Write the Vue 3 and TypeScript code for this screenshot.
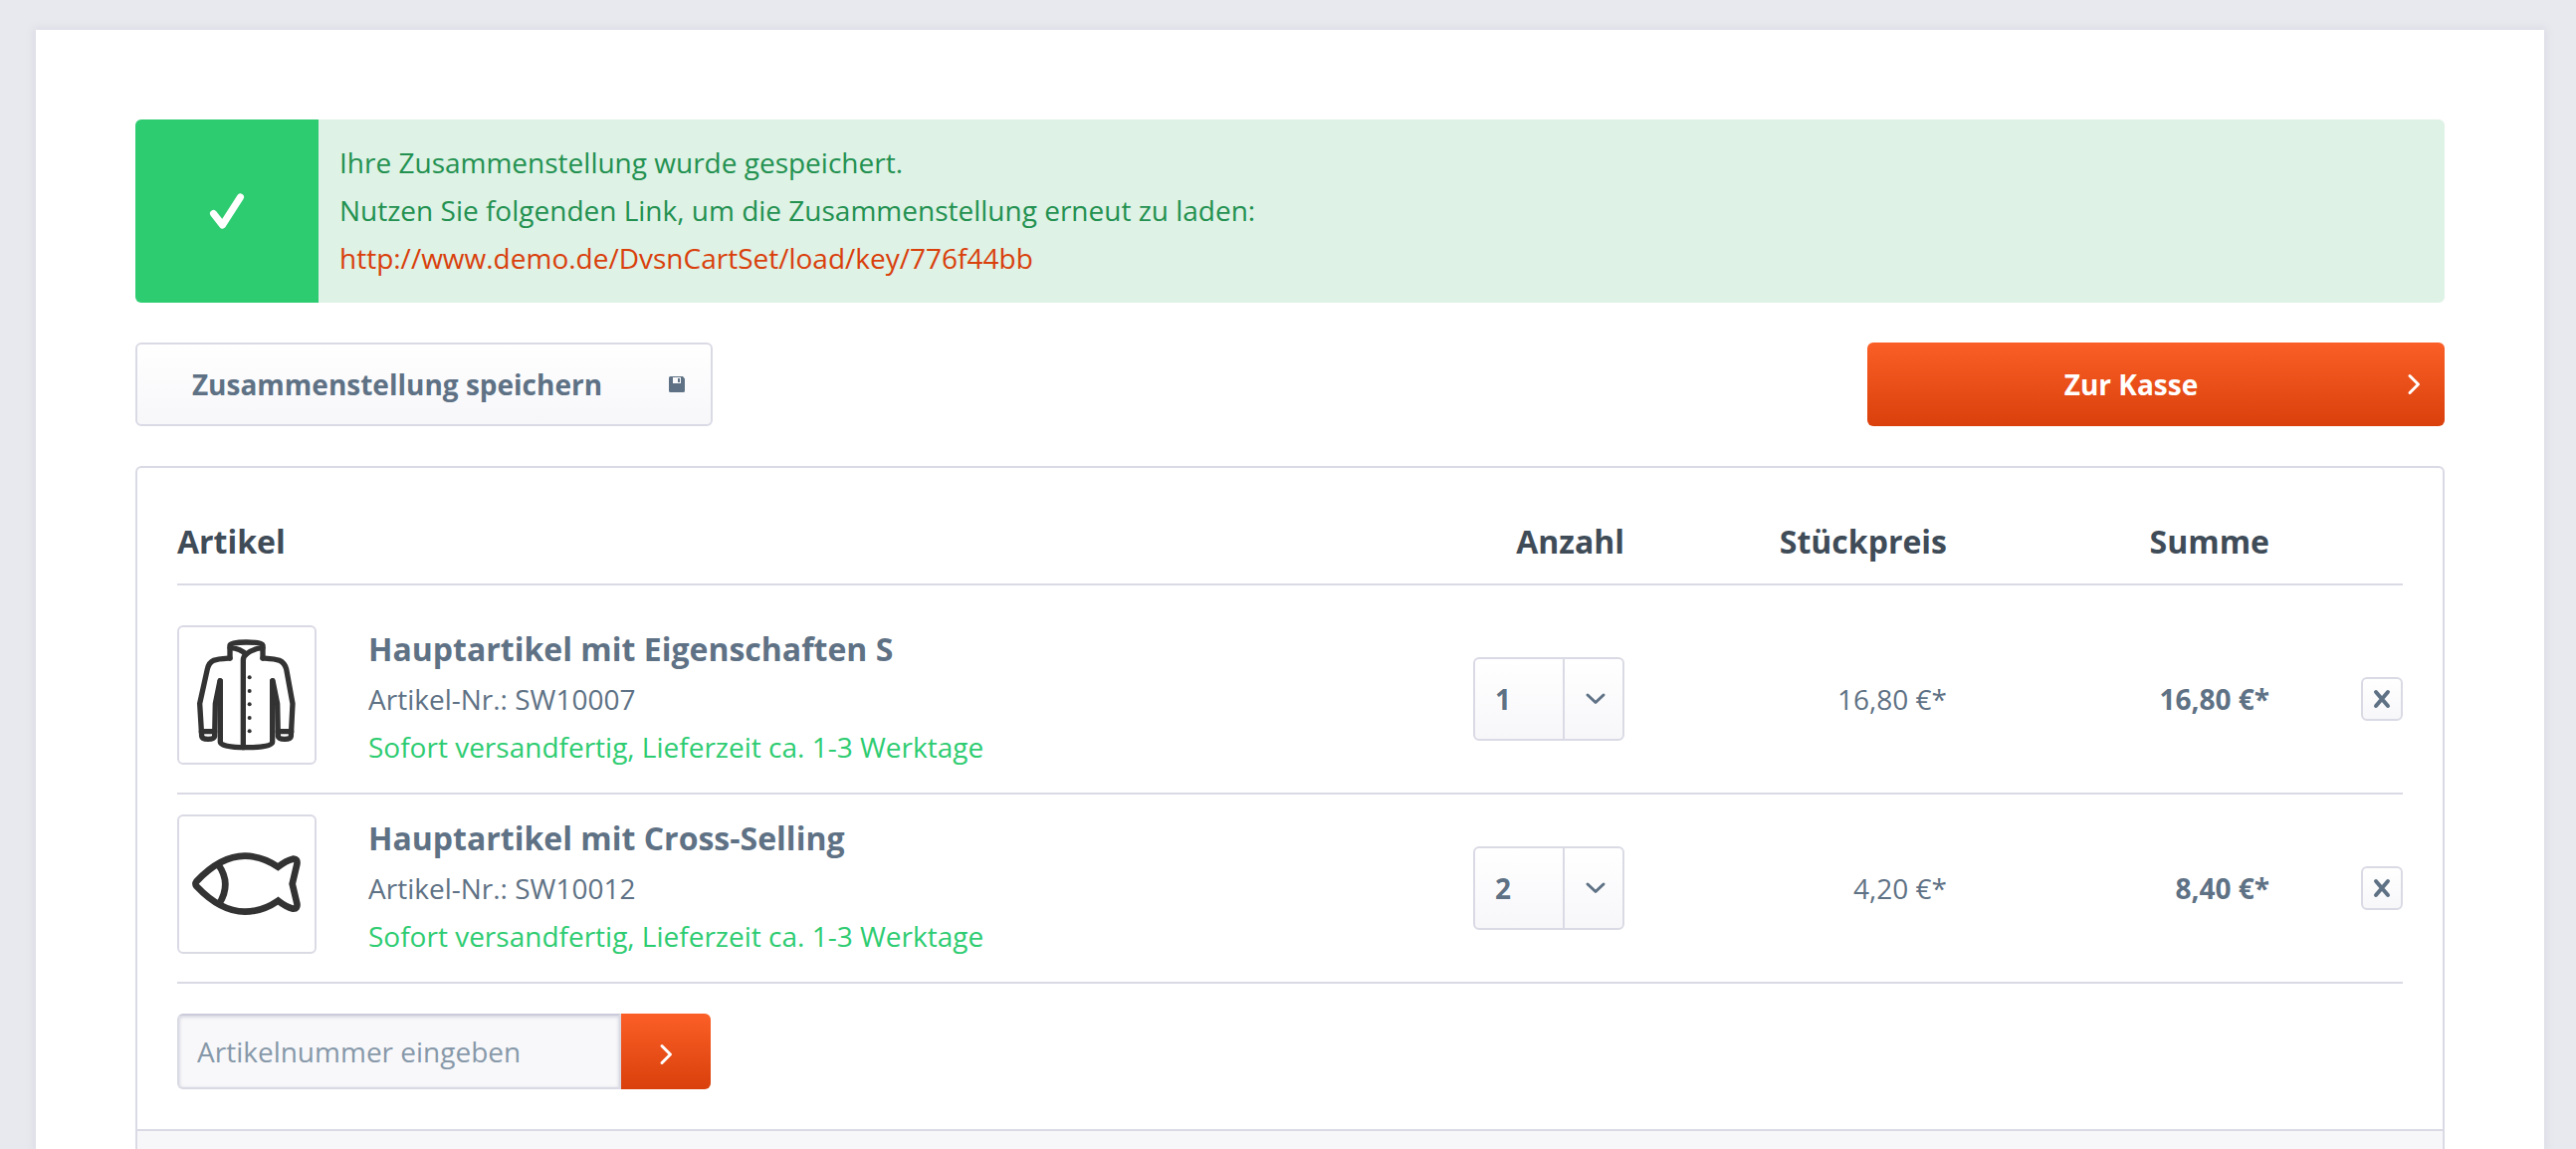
<script setup lang="ts">
import { ref } from 'vue'

interface CartItem {
  id: string
  name: string
  delivery: string
  quantity: number
  price: string
  sum: string
  picture: 'jacket' | 'fish'
}

const loadUrl = 'http://www.demo.de/DvsnCartSet/load/key/776f44bb'
const articleNumber = ref('')

const items = ref<CartItem[]>([
  {
    id: 'SW10007',
    name: 'Hauptartikel mit Eigenschaften S',
    delivery: 'Sofort versandfertig, Lieferzeit ca. 1-3 Werktage',
    quantity: 1,
    price: '16,80 €*',
    sum: '16,80 €*',
    picture: 'jacket',
  },
  {
    id: 'SW10012',
    name: 'Hauptartikel mit Cross-Selling',
    delivery: 'Sofort versandfertig, Lieferzeit ca. 1-3 Werktage',
    quantity: 2,
    price: '4,20 €*',
    sum: '8,40 €*',
    picture: 'fish',
  },
])

function removeItem(id: string): void {
  items.value = items.value.filter((item) => item.id !== id)
}
</script>

<template>
  <div class="page">
    <main class="sheet">
      <div class="alert" role="status">
        <div class="alert-icon">
          <svg width="36" height="36" viewBox="0 0 36 36" aria-hidden="true">
            <path d="M4.5 20.5 13.5 32 31.5 4" />
          </svg>
        </div>
        <p class="alert-text">
          Ihre Zusammenstellung wurde gespeichert.<br />
          Nutzen Sie folgenden Link, um die Zusammenstellung erneut zu laden:<br />
          <a :href="loadUrl">{{ loadUrl }}</a>
        </p>
      </div>

      <div class="actions">
        <button type="button" class="btn secondary">
          <span class="btn-label">Zusammenstellung speichern</span>
          <svg class="save" width="16" height="16" viewBox="0 0 16 16" aria-hidden="true">
            <path fill-rule="evenodd" d="M1.500 0H14l2 2.500V14.500Q16 16 14.500 16H1.500Q0 16 0 14.500V1.500Q0 0 1.500 0ZM4 1V7H12V1ZM9 2H11V6H9Z" />
          </svg>
        </button>
        <button type="button" class="btn primary">
          <span class="btn-label">Zur Kasse</span>
          <svg class="chevron" width="14" height="22" viewBox="0 0 14 22" aria-hidden="true">
            <path d="M3 2.500 11.500 11 3 19.500" />
          </svg>
        </button>
      </div>

      <section class="panel">
        <div class="panel-body">
          <table class="cart">
            <colgroup>
              <col />
              <col class="col-value" />
              <col class="col-value" />
              <col class="col-value" />
              <col class="col-remove" />
            </colgroup>
            <thead>
              <tr>
                <th scope="col" class="first">Artikel</th>
                <th scope="col">Anzahl</th>
                <th scope="col">Stückpreis</th>
                <th scope="col">Summe</th>
                <td></td>
              </tr>
            </thead>
            <tbody>
              <tr class="spacer" aria-hidden="true"><td colspan="5"></td></tr>
              <tr v-for="item in items" :key="item.id" class="item">
                <td>
                  <div class="article">
                    <div class="thumb">
                      <svg v-if="item.picture === 'jacket'" viewBox="60 60 408 408" aria-hidden="true">
                        <g class="jacket">
                          <path d="M213 153V114Q216 105 263 105T312 114V153" />
                          <path d="M213 122Q246 124 261 142Q282 124 312 122" />
                          <path d="M261 142Q253 148 253 160V422" />
                          <path d="M213 153C170 156 152 156 145 186L122 290 128 388Q129 397 147 397T167 388L169 290 183 221" />
                          <path d="M312 153C355 156 374 156 383 186L402 290 397 388Q396 397 378 397T358 388L356 290 342 221" />
                          <path d="M184 222V406Q186 422 263 422T341 406V222" />
                          <path d="M127 374H167M358 374H398" />
                        </g>
                        <path class="solid" d="M183 222 169 292H184ZM342 222 356 292H341Z" />
                        <circle v-for="y in [211, 252, 292, 333, 373]" :key="y" class="solid" cx="272" :cy="y" r="6" />
                      </svg>
                      <svg v-else viewBox="60 60 408 408" aria-hidden="true">
                        <g class="fish">
                          <path d="M112 256Q185 179 258 179Q310 179 358 212Q382 193 403 188Q418 187 415 204L401 263 415 322Q418 339 403 338Q382 333 358 314Q310 347 258 347Q185 347 112 270Q107 263 112 256Z" />
                          <path d="M178 205Q219 263 180 324" />
                        </g>
                      </svg>
                    </div>
                    <div class="details">
                      <h2>{{ item.name }}</h2>
                      <p>Artikel-Nr.: {{ item.id }}</p>
                      <p class="delivery">{{ item.delivery }}</p>
                    </div>
                  </div>
                </td>
                <td>
                  <div class="quantity">
                    <select v-model="item.quantity" :aria-label="`Anzahl ${item.name}`">
                      <option v-for="n in 10" :key="n" :value="n">{{ n }}</option>
                    </select>
                    <span class="arrow">
                      <svg width="20" height="14" viewBox="0 0 20 14" aria-hidden="true">
                        <path d="M3 3 11 10.500 19 3" />
                      </svg>
                    </span>
                  </div>
                </td>
                <td>{{ item.price }}</td>
                <td class="sum">{{ item.sum }}</td>
                <td>
                  <button
                    type="button"
                    class="remove"
                    :aria-label="`${item.name} entfernen`"
                    @click="removeItem(item.id)"
                  >
                    <svg width="18" height="18" viewBox="0 0 18 18" aria-hidden="true">
                      <path d="M3 2 15 16M15 2 3 16" />
                    </svg>
                  </button>
                </td>
              </tr>
            </tbody>
          </table>

          <form class="add" @submit.prevent>
            <input
              v-model="articleNumber"
              type="text"
              placeholder="Artikelnummer eingeben"
              aria-label="Artikelnummer eingeben"
            />
            <button type="submit" aria-label="Artikel hinzufügen">
              <svg class="chevron" width="14" height="22" viewBox="0 0 14 22" aria-hidden="true">
                <path d="M3 2.500 11.500 11 3 19.500" />
              </svg>
            </button>
          </form>
        </div>
        <div class="panel-footer"></div>
      </section>
    </main>
  </div>
</template>

<style>
body {
  background: #e8e9ee;
}
</style>

<style scoped>
* {
  box-sizing: border-box;
}

.page {
  display: flex;
  min-height: 100vh;
  padding: 30px 32px 0 36px;
  font: 400 28px/48px "Open Sans", sans-serif;
  color: #5f7285;
}

.sheet {
  display: flex;
  flex: 1;
  flex-direction: column;
  padding: 90px 100px 0;
  background: #fff;
  box-shadow: 0 0 8px 2px #dadae5;
}

svg {
  display: block;
  fill: none;
  overflow: visible;
}

button,
input,
select {
  margin: 0;
  font: inherit;
  color: inherit;
}

button {
  padding: 0;
  cursor: pointer;
}

h2,
p {
  margin: 0;
}

.alert {
  display: flex;
  overflow: hidden;
  border-radius: 6px;
  background: #def2e6;
  color: #239150;
}

.alert-icon {
  display: grid;
  place-items: center;
  width: 184px;
  background: #2ecc71;
}

.alert-icon path {
  stroke: #fff;
  stroke-width: 7;
  stroke-linecap: round;
  stroke-linejoin: round;
}

.alert-text {
  padding: 19px 21px 21px;
}

.alert-text a {
  color: #d9400b;
  text-decoration: none;
}

.actions {
  display: flex;
  justify-content: space-between;
  margin: 40px 0;
}

.btn {
  display: flex;
  align-items: center;
  width: 25%;
  height: 84px;
  padding: 0 24px;
  border: 0;
  border-radius: 6px;
  font-weight: 700;
}

.btn-label {
  flex: 1;
  text-align: center;
}

.btn svg {
  margin-left: 36px;
}

.secondary,
.remove {
  border: 2px solid #dadae5;
  background: linear-gradient(#fff, #f7f7fa);
}

.btn.secondary {
  padding-right: 26px;
}

.primary,
.add button {
  background: linear-gradient(#fb5f27, #d9400b);
  color: #fff;
}

.save {
  fill: #5f7285;
}

.chevron path,
.arrow path {
  stroke: currentColor;
  stroke-width: 3;
  stroke-linecap: round;
  stroke-linejoin: round;
}

.panel {
  display: flex;
  flex: 1;
  flex-direction: column;
  border: 2px solid #dadae5;
  border-bottom: 0;
  border-radius: 6px 6px 0 0;
}

.panel-body {
  padding: 40px;
}

.panel-footer {
  flex: 1;
  min-height: 18px;
  border-top: 2px solid #dadae5;
  background: #f7f7fa;
}

.cart {
  width: 100%;
  table-layout: fixed;
  border-collapse: separate;
  border-spacing: 0;
  text-align: right;
}

.col-value {
  width: 324px;
}

.col-remove {
  width: 134px;
}

.cart th,
.cart td {
  padding: 0;
  border-bottom: 2px solid #dadae5;
}

.cart th {
  padding: 10px 0 18px;
  font-size: 32px;
  font-weight: 700;
  color: #3f4c58;
}

.cart th.first {
  text-align: left;
}

.cart .spacer td {
  height: 20px;
  border: 0;
}

.article {
  display: flex;
  gap: 52px;
  padding: 20px 0 22px;
  text-align: left;
}

.thumb {
  width: 140px;
  height: 140px;
  border: 2px solid #dadae5;
  border-radius: 6px;
}

.thumb svg {
  width: 100%;
  height: 100%;
}

.jacket {
  stroke: #333;
  stroke-width: 16;
  stroke-linecap: round;
  stroke-linejoin: round;
}

.fish {
  stroke: #333;
  stroke-width: 20;
}

.solid {
  fill: #333;
}

.details h2 {
  margin-bottom: 2px;
  font-size: 32px;
  line-height: 48px;
  font-weight: 700;
}

.delivery {
  color: #2ecc71;
}

.quantity {
  position: relative;
  width: 152px;
  margin-left: auto;
}

.quantity select {
  display: block;
  width: 100%;
  height: 84px;
  padding: 0 20px;
  border: 2px solid #dadae5;
  border-radius: 6px;
  background: linear-gradient(#fff, #f7f7fa);
  font-weight: 700;
  appearance: none;
}

.arrow {
  position: absolute;
  inset: 0 0 0 auto;
  display: grid;
  place-items: center;
  width: 62px;
  border-left: 2px solid #dadae5;
  pointer-events: none;
}

.sum {
  font-weight: 700;
}

.remove {
  display: grid;
  place-items: center;
  width: 42px;
  height: 44px;
  margin-left: auto;
  border-radius: 6px;
}

.remove path {
  stroke: #5f7285;
  stroke-width: 4;
  stroke-linecap: round;
}

.add {
  display: flex;
  margin-top: 30px;
}

.add input {
  width: 446px;
  height: 76px;
  padding: 0 20px 0 18px;
  border: 2px solid #dadae5;
  border-top-color: #cbcbdb;
  border-radius: 6px 0 0 6px;
  background: #f8f8fa;
  box-shadow: inset 0 1px 3px 1px #dadae5;
}

.add input::placeholder {
  color: #8798a9;
  opacity: 1;
}

.add button {
  display: grid;
  place-items: center;
  width: 90px;
  padding-top: 6px;
  border: 0;
  border-radius: 0 6px 6px 0;
}
</style>
